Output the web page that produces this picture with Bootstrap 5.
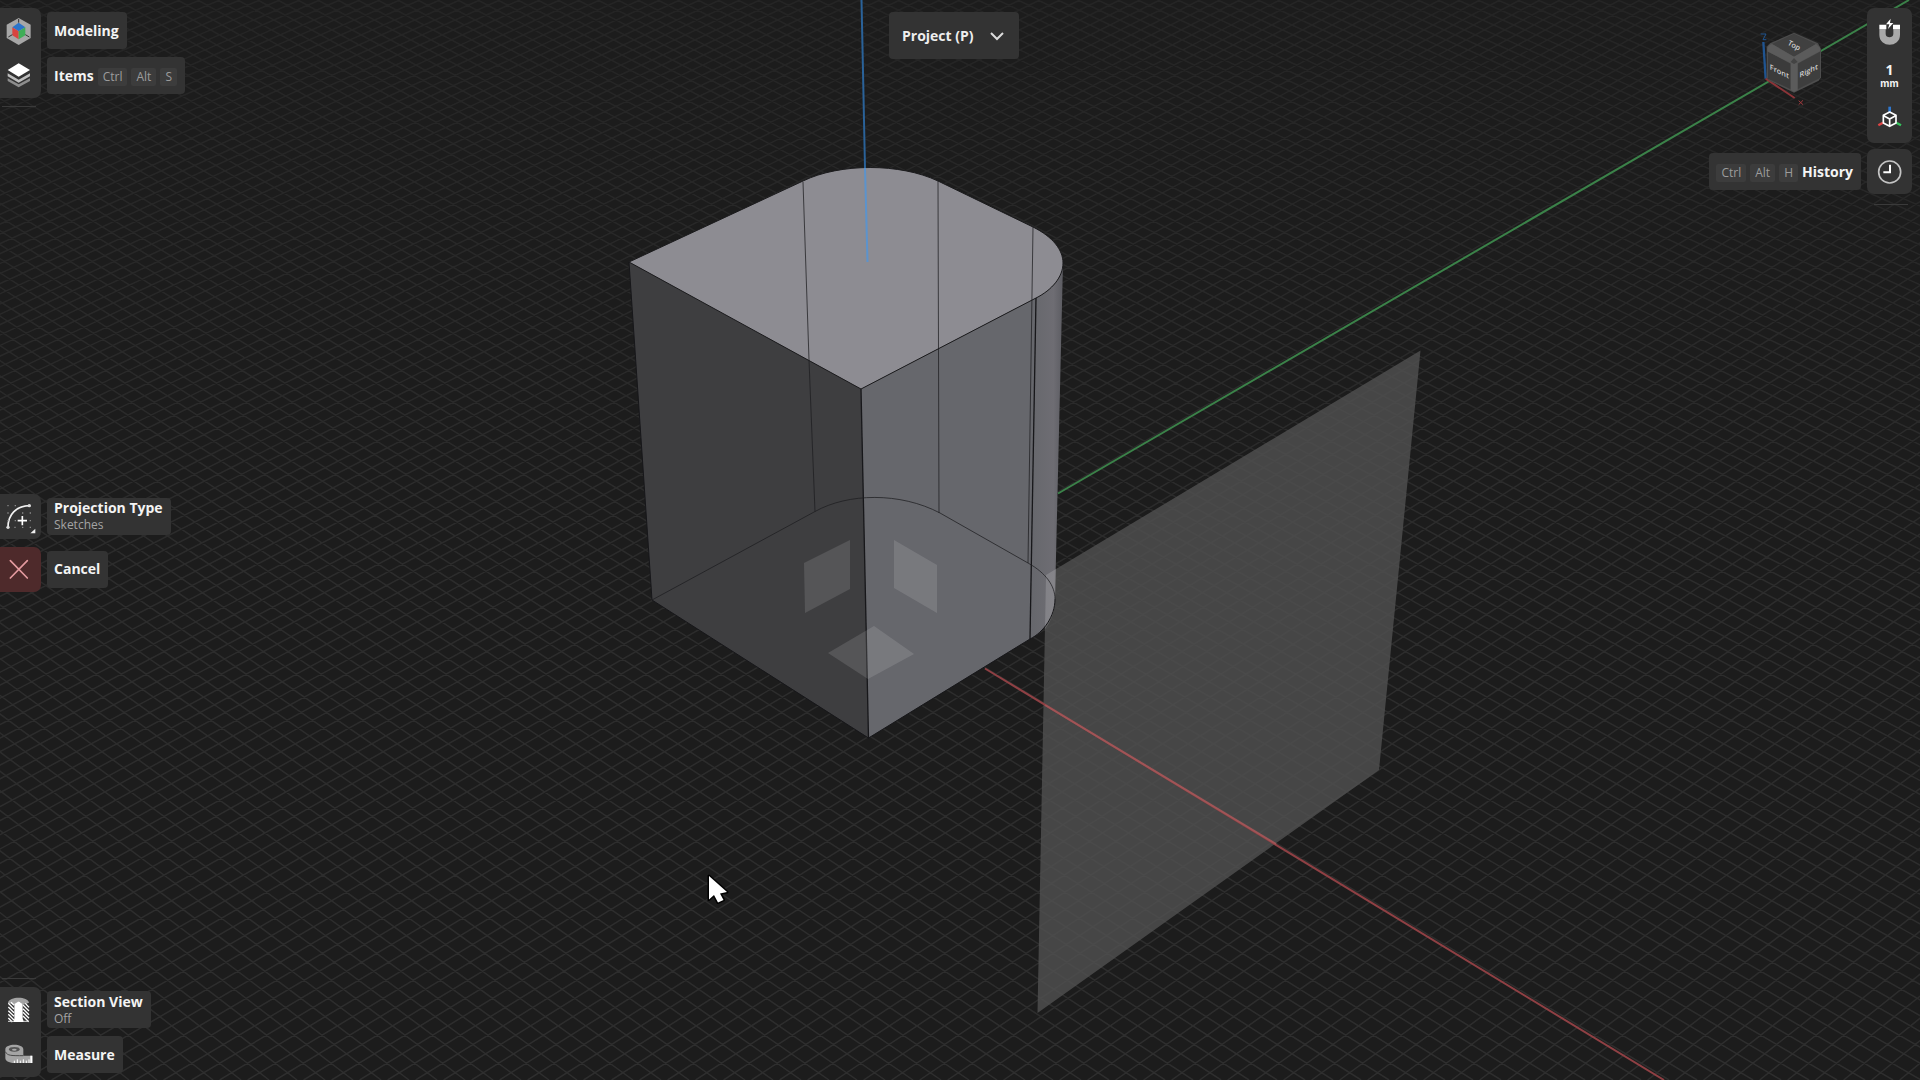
<!DOCTYPE html>
<html lang="en">
<head>
<meta charset="utf-8">
<meta name="viewport" content="width=device-width, initial-scale=1">
<title>Modeling</title>
<link rel="stylesheet" href="https://cdn.jsdelivr.net/npm/bootstrap@5.3.0/dist/css/bootstrap.min.css">
<style>
  body { background: #1c1c1c; color: #f4f4f4; font-family: "Open Sans", "Noto Sans", sans-serif; font-size: 14px; line-height: 18px; }
  .scene { z-index: 0; }
  .overlay { z-index: 1; pointer-events: none; }
  .overlay button { pointer-events: auto; }
  .rail-left { display: grid; grid-template-rows: 1fr auto 1fr; padding: 8px 0 3px; }
  .tool { background: none; border: 0; padding: 0; color: inherit; font-weight: 700; text-align: left; height: 45px; gap: 6px; }
  .tool-icon { width: 41px; height: 45px; background: #333; flex: none; display: block; }
  .tool-icon-r { width: 45px; height: 45px; display: block; }
  .top-cell { border-top-right-radius: 7px; }
  .bottom-cell { border-bottom-right-radius: 7px; }
  .danger-cell { background: #4e2a2b; }
  .tag { background: #333; border-radius: 4px; height: 37px; padding: 0 8px 0 7px; gap: 4px; }
  .tag-stack { line-height: 16px; padding-top: 2px; }
  .tag-stack small { font-size: 12px; line-height: 18px; font-weight: 400; color: #a4a4a4; }
  .keycap { background: #3c3c3c; color: #9c9c9c; border-radius: 2px; font-size: 12px; font-weight: 400; height: 18px; padding: 0 5px; line-height: 18px; margin-top: 2px; }
  .rule { width: 34px; height: 1px; background: #3a3a3a; margin-left: 2px; }
  .rail-right { padding: 8px 8px 0 0; gap: 6px; }
  .panel-r { background: #333; border-radius: 7px; }
  .panel-r button { background: none; border: 0; padding: 0; color: #f4f4f4; height: 45px; width: 45px; }
  .unit-step { font-size: 14px; font-weight: 700; line-height: 14px; }
  .unit-name { font-size: 10px; font-weight: 700; line-height: 12px; font-family: Inter, sans-serif; }
  .cube { width: 70px; height: 80px; margin: 22px 42px 0 0; }
  .cube text { font: 600 22px "Open Sans", sans-serif; fill: #d0d0d0; text-anchor: middle; }
  .mode { background: #333; border: 0; border-radius: 4px; color: #eee; font-weight: 700; width: 130px; height: 47px; padding: 0 14px 0 13px; margin: 12px 12px 0 0; }
</style>
<script src="https://cdn.jsdelivr.net/npm/bootstrap@5.3.0/dist/js/bootstrap.bundle.min.js"></script>
</head>
<body class="vh-100 overflow-hidden position-relative">

<svg class="scene position-absolute top-0 start-0 w-100 h-100" viewBox="0 0 1920 1080" preserveAspectRatio="xMidYMid slice" aria-label="3D viewport">
  <defs>
    <linearGradient id="fade" x1="0" y1="0" x2="0" y2="1">
      <stop offset="0" stop-color="#fff" stop-opacity=".5"/>
      <stop offset=".5" stop-color="#fff" stop-opacity=".9"/>
      <stop offset="1" stop-color="#fff" stop-opacity="1"/>
    </linearGradient>
    <mask id="fadeMask"><rect width="1920" height="1080" fill="url(#fade)"/></mask>
    <linearGradient id="fillet" x1="1031" x2="1063" y1="0" y2="0" gradientUnits="userSpaceOnUse">
      <stop offset="0" stop-color="#66676c"/><stop offset=".7" stop-color="#6e6d73"/><stop offset="1" stop-color="#5c5c62"/>
    </linearGradient>
  </defs>
  <g mask="url(#fadeMask)"><path id="grid" fill="none" stroke="#2e2e2e" stroke-width="1.500"/></g>
  <path d="M1420.500 350.500L1379 770L1037.500 1013L1046 575Z" fill="#515151" fill-opacity=".8"/>
  <path d="M1058 493.500L1909 0" stroke="#3b8249" stroke-width="2"/>
  <path d="M985 668.500L1664 1080" stroke="#8f4044" stroke-width="2"/>
  <path d="M1045 705L1276 844" stroke="#a05557" stroke-width="2"/>
  <!-- solid -->
  <path d="M629 262L861 389L868.500 738L652 600Z" fill="#3e3e40"/>
  <path d="M861 389L1036 298L1030 639L868.500 738Z" fill="#66676c"/>
  <path d="M1036 298C1052 290 1063 277 1063 263L1055 599C1055 616 1044 632 1030 639Z" fill="url(#fillet)"/>
  <path d="M629 262L803 181C840 163 900 163 938 181L1033 227C1053 237 1063 250 1063 263C1063 277 1052 290 1036 298L861 389Z" fill="#8d8c92" stroke="#1b1b1d" stroke-width="1"/>
  <path d="M1046 575L1056 569L1055 599C1055 611 1051 622 1045 629Z" fill="#fff" fill-opacity=".16"/>
  <g fill="none" stroke="#17171a" stroke-width="1">
    <path d="M629 262L652 600L868.500 738L1030 639C1044 632 1055 616 1055 599"/>
    <path d="M861 389L868.500 738" stroke-width="1.300"/>
    <path d="M1036 298L1030 639" stroke-width="1.300"/>
  </g>
  <g fill="none" stroke="#1d1d20" stroke-opacity=".75">
    <path d="M652 600L815 511.500C848 493 900 492 940 513L1028 563C1046 573 1055 586 1055 599"/>
    <path d="M803 182L809 360L815 511.500M938 181L939 513M1033 227L1028 563"/>
  </g>
  <path d="M861.500 0L865 168" stroke="#2a6299" stroke-width="2"/>
  <path d="M865 168L867.500 262" stroke="#5c93cc" stroke-width="2"/>
  <!-- reference planes -->
  <g fill="#fff" fill-opacity=".12">
    <path d="M804 563L850 540V589L805 613Z"/>
    <path d="M894 540L937 565V613L894 588Z"/>
    <path d="M828 653L874 626L914 654L868 679Z"/>
  </g>
  <path d="M709 876V899.500L714 895L718 902.500L723.500 900L720 893.500L727 892Z" fill="#fff" stroke="#000" stroke-width="3" stroke-linejoin="round" paint-order="stroke"/>
</svg>

<div class="overlay position-absolute top-0 start-0 w-100 h-100 d-flex justify-content-between">
  <nav class="rail-left h-100" aria-label="Tools">
    <div>
      <button class="tool d-flex align-items-center">
        <svg class="tool-icon top-cell" viewBox="0 24 123 135">
          <path d="M56 54L92 74V114L56 135L20 114V74Z" fill="#a7a7a7"/>
          <path d="M56 68L76 82L56 94L37 82Z" fill="#2b74c9"/>
          <path d="M37 82L56 94V118L37 106Z" fill="#d9443f"/>
          <path d="M76 82L56 94V118L76 106Z" fill="#3fae57"/>
          <path d="M56 57V68M37 104L25 111M76 104L88 111" stroke="#333" stroke-width="3"/>
        </svg>
        <span class="tag d-flex align-items-center">Modeling</span>
      </button>
      <button class="tool d-flex align-items-center">
        <svg class="tool-icon bottom-cell" viewBox="0 159 123 135">
          <path d="M56 190L90 210L56 230L23 210Z" fill="#fff"/>
          <path d="M23 220L56 239L90 220V229L56 248L23 229Z" fill="#bdbdbd"/>
          <path d="M23 235L56 253L90 235V243L56 262L23 243Z" fill="#8d8d8d"/>
        </svg>
        <span class="tag d-flex align-items-center">Items <span class="keycap">Ctrl</span><span class="keycap">Alt</span><span class="keycap">S</span></span>
      </button>
      <div class="rule mt-2"></div>
    </div>
    <div class="d-flex flex-column align-items-start gap-2">
      <button class="tool d-flex align-items-center">
        <svg class="tool-icon top-cell bottom-cell" viewBox="0 42 123 135">
          <path d="M24 142C24 103 48 79 88 77" fill="none" stroke="#f2f2f2" stroke-width="5"/>
          <circle cx="24" cy="142" r="5" fill="#ddd"/><circle cx="88" cy="77" r="5" fill="#ddd"/>
          <path d="M67 108V136M53 122H81" stroke="#fff" stroke-width="5"/>
          <path d="M22 77h4m18 0h4M22 99h4m40 0h4m19 0h4M22 122h4m18 0h4m41 0h4M43 142h4m19 0h4m19 0h4" stroke="#888" stroke-width="4"/>
          <path d="M106 146V160H91Z" fill="#eee"/>
        </svg>
        <span class="tag tag-stack d-flex flex-column justify-content-center gap-0">Projection Type<small>Sketches</small></span>
      </button>
      <button class="tool d-flex align-items-center">
        <svg class="tool-icon top-cell bottom-cell danger-cell" viewBox="0 201 123 135">
          <path d="M31 242L82 294M82 242L31 294" stroke="#e39a9f" stroke-width="5" stroke-linecap="round"/>
        </svg>
        <span class="tag d-flex align-items-center">Cancel</span>
      </button>
    </div>
    <div class="d-flex flex-column align-items-start justify-content-end">
      <div class="rule mb-2"></div>
      <button class="tool d-flex align-items-center">
        <svg class="tool-icon top-cell" viewBox="0 81 123 135">
          <path d="M24 128C28 108 84 108 87 128L70 134L56 124L42 134Z" fill="#a3a3a3"/>
          <path d="M43 132L56 124L68 132V176L72 186H40L43 176Z" fill="#fff"/>
          <path d="M25 130L42 147M25 141L42 158M25 152L42 169M25 163L42 180M25 174L37 186M33 127L42 136M69 135L87 153M69 146L87 164M69 157L87 175M69 168L86 185M76 130L87 142" stroke="#fff" stroke-width="4"/>
          <path d="M24 184H42M69 184H87" stroke="#ddd" stroke-width="3"/>
        </svg>
        <span class="tag tag-stack d-flex flex-column justify-content-center gap-0">Section View<small>Off</small></span>
      </button>
      <button class="tool d-flex align-items-center">
        <svg class="tool-icon bottom-cell" viewBox="0 216 123 135">
          <path d="M16 268C16 250 70 250 70 268V287H97V309H43C25 309 16 302 16 294Z" fill="#a5a5a5"/>
          <ellipse cx="43" cy="268" rx="16" ry="7" fill="#555"/><ellipse cx="43" cy="269" rx="7" ry="3" fill="#aaa"/>
          <path d="M16 275C22 288 35 287 70 287" fill="none" stroke="#4a4a4a" stroke-width="3"/>
          <path d="M43 309V302M52 309V298M61 309V302M70 309V298M79 309V302M87 309V298" stroke="#fff" stroke-width="3"/><path d="M91 287H97V309H91Z" fill="#fff"/>
        </svg>
        <span class="tag d-flex align-items-center">Measure</span>
      </button>
    </div>
  </nav>

  <div class="position-absolute top-0 start-0 w-100 d-flex justify-content-center">
    <button class="mode d-flex align-items-center justify-content-between" aria-haspopup="true">Project (P)
      <svg width="16" height="10" viewBox="0 0 16 10"><path d="M2 2L8 8L14 2" fill="none" stroke="#ddd" stroke-width="2"/></svg>
    </button>
  </div>

  <div class="rail-right d-flex flex-column align-items-end">
    <div class="d-flex align-items-start">
      <svg class="cube" viewBox="195 90 210 240" aria-label="View cube">
        <path d="M220 126L227 236" stroke="#1f5490" stroke-width="7"/>
        <path d="M212 102H228L219 119H229" fill="none" stroke="#1f5490" stroke-width="3"/>
        <path d="M227 236L314 294" stroke="#8c3438" stroke-width="6"/>
        <path d="M326 302L339 314M339 301L326 314" stroke="#a03a3e" stroke-width="3"/>
        <path d="M312 98L384 130L393 146V232L386 242L312 278L238 242L230 234V140L240 130Z" fill="#4d4d4d"/>
        <path d="M312 101L378 132L312 170L246 132Z" fill="#404040"/>
        <path d="M234 155L302 191V268L234 236Z" fill="#3b3b3b"/>
        <path d="M323 191L390 155V234L323 268Z" fill="#3e3e3e"/>
        <path d="M238 135L246 132L312 170L378 132L390 143V154L323 190V270L312 276L302 270V190L232 154V143Z" fill="#5b5b5b"/>
        <path d="M312 174L323 186L312 192L302 186Z" fill="#444"/>
        <text transform="translate(309 143) rotate(28)">Top</text>
        <text transform="translate(268 222) skewY(26)">Front</text>
        <text transform="translate(356 220) skewY(-26)">Right</text>
      </svg>
      <div class="panel-r d-flex flex-column">
        <button aria-label="Snapping"><svg class="tool-icon-r" viewBox="531 24 135 135">
          <path d="M568 88H587V102C587 115 610 115 610 102V88H630V104C630 144 568 144 568 104Z" fill="#a9a9a9"/>
          <path d="M568 74H589V88H568ZM609 74H630V88H609Z" fill="#fff"/>
          <path d="M602 56L588 73H598L594 87L610 69H600Z" fill="#fff"/>
        </svg></button>
        <button class="d-flex flex-column align-items-center justify-content-center"><span class="unit-step">1</span><span class="unit-name">mm</span></button>
        <button aria-label="Orientation"><svg class="tool-icon-r" viewBox="531 294 135 135">
          <path d="M599 320V336" stroke="#2f78cf" stroke-width="8"/>
          <path d="M579 368L565 376" stroke="#df4444" stroke-width="7"/><path d="M619 368L633 376" stroke="#35c45c" stroke-width="7"/>
          <path d="M599 336L618 346V369L599 379L580 369V346ZM581 347L599 357L617 347M599 357V378" fill="#333" stroke="#fff" stroke-width="5" stroke-linejoin="round"/>
        </svg></button>
      </div>
    </div>
    <button class="tool d-flex align-items-center">
      <span class="tag d-flex align-items-center"><span class="keycap">Ctrl</span><span class="keycap">Alt</span><span class="keycap">H</span> History</span>
      <span class="panel-r"><svg class="tool-icon-r" viewBox="531 447 135 135">
        <circle cx="599" cy="516" r="33" fill="none" stroke="#c4c4c4" stroke-width="5"/>
        <path d="M600 494V517H580" fill="none" stroke="#fff" stroke-width="6"/>
      </svg></span>
    </button>
    <div class="rule mt-1 me-1"></div>
  </div>
</div>

<script>
  // Ground grid in two-point perspective: each family fans out from one vanishing point
  const horizon = -2700, half = 5560, base = 1080, step = 28;
  const origin = { x: 873, y: 600 };
  let d = '';
  for (const vx of [960 + half, 960 - half]) {
    const t = (base - horizon) / (origin.y - horizon);
    const x0 = vx + (origin.x - vx) * t;
    for (let k = -130; k <= 130; k++) {
      const xb = x0 + k * step;
      const top = vx + (xb - vx) * (0 - horizon) / (base - horizon);
      d += `M${xb.toFixed(2)} ${base}L${top.toFixed(2)} 0`;
    }
  }
  document.getElementById('grid').setAttribute('d', d);
</script>
</body>
</html>
